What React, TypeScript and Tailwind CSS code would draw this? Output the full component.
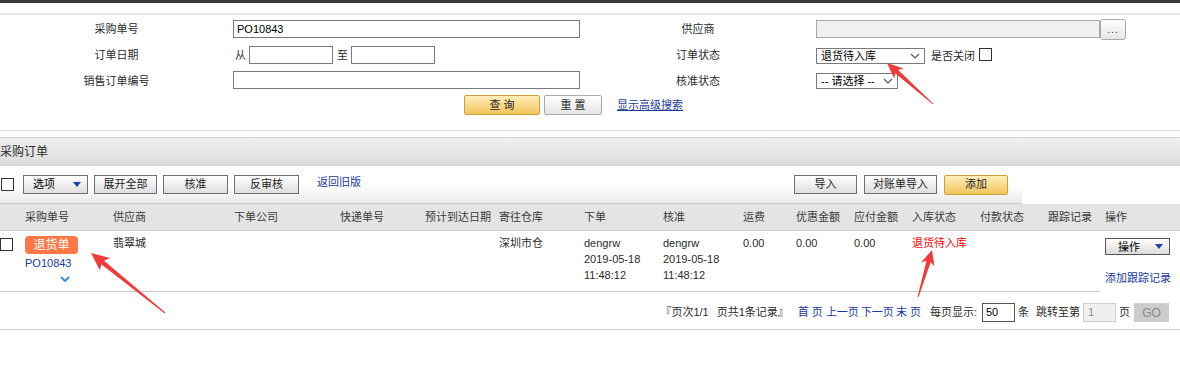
import React from 'react';

const btnBase =
  'h-[19px] border border-[#707070] bg-gradient-to-b from-white to-[#dedede] flex items-center text-[#222] shrink-0';
const btn = `${btnBase} justify-center`;
const goldBtn =
  'h-[20px] border border-[#cf9f35] rounded-[2px] bg-gradient-to-b from-[#fdeeb8] to-[#f1c55a] flex items-center justify-center text-[#222] shrink-0';
const link = 'text-[#1b3a9e]';

const Chevron = ({ className = '' }: { className?: string }) => (
  <svg width="10" height="6" viewBox="0 0 10 6" className={className}>
    <path d="M1 1 L5 5 L9 1" fill="none" stroke="#555" strokeWidth="1.2" />
  </svg>
);

const Caret = () => (
  <svg width="8" height="5" viewBox="0 0 8 5">
    <path d="M0 0 H8 L4 5 Z" fill="#1c3db5" />
  </svg>
);

const Checkbox = ({ className = '' }: { className?: string }) => (
  <div className={`w-[13px] h-[13px] border border-[#333] bg-white shrink-0 ${className}`} />
);

// red annotation arrow: thin tail, notched head
const arrow = (x1: number, y1: number, x2: number, y2: number, headLen: number, headW: number) => {
  const dx = x2 - x1;
  const dy = y2 - y1;
  const len = Math.hypot(dx, dy);
  const ux = dx / len;
  const uy = dy / len;
  const px = -uy;
  const py = ux;
  const bx = x2 - ux * headLen;
  const by = y2 - uy * headLen;
  const nx = bx + ux * 3;
  const ny = by + uy * 3;
  const pts = [
    [x1 + px * 0.5, y1 + py * 0.5],
    [nx + px * 2.2, ny + py * 2.2],
    [bx + px * headW, by + py * headW],
    [x2, y2],
    [bx - px * headW, by - py * headW],
    [nx - px * 2.2, ny - py * 2.2],
    [x1 - px * 0.5, y1 - py * 0.5],
  ];
  return pts.map((p) => p.join(',')).join(' ');
};

const cols =
  'grid grid-cols-[25px_88px_121px_106px_85px_74px_85px_79px_80px_53px_58px_58px_68px_68px_57px_75px]';

const headers = [
  '',
  '采购单号',
  '供应商',
  '下单公司',
  '快递单号',
  '预计到达日期',
  '寄往仓库',
  '下单',
  '核准',
  '运费',
  '优惠金额',
  '应付金额',
  '入库状态',
  '付款状态',
  '跟踪记录',
  '操作',
];

export default function App() {
  return (
    <div className="relative w-[1180px] h-[371px] overflow-hidden bg-white text-[11px] text-[#2b2b2b] whitespace-nowrap font-['Liberation_Sans','Noto_Sans_CJK_SC',sans-serif]">
      <div className="h-[3px] bg-[#383838]" />
      <div className="h-[10px]" />
      <div className="h-[2px] bg-[#e8e8e8]" />

      {/* search form */}
      <div className="pt-[1px]">
        <div className="grid grid-cols-[233px_347px_236px_1fr] auto-rows-[26px] items-center">
          <div className="text-center">采购单号</div>
          <div className="h-[18px] border border-[#7a7a7a] px-[3px] flex items-center text-black">PO10843</div>
          <div className="text-center">供应商</div>
          <div className="flex items-center">
            <div className="w-[284px] h-[18px] border border-[#a8a8a8] bg-[#f0f0f0]" />
            <div className="w-[26px] h-[21px] border border-[#a8a8a8] rounded-[3px] bg-gradient-to-b from-white to-[#e6e6e6] flex items-center justify-center text-[10px] tracking-[1px]">
              ...
            </div>
          </div>

          <div className="text-center">订单日期</div>
          <div className="flex items-center">
            <span className="ml-[2px]">从</span>
            <div className="ml-[3px] w-[84px] h-[18px] border border-[#7a7a7a]" />
            <span className="ml-[4px]">至</span>
            <div className="ml-[3px] w-[84px] h-[18px] border border-[#7a7a7a]" />
          </div>
          <div className="text-center">订单状态</div>
          <div className="flex items-center pt-[2px]">
            <div className="w-[109px] h-[16px] border border-[#7a7a7a] flex items-center justify-between pl-[4px] pr-[4px]">
              <span className="text-black">退货待入库</span>
              <Chevron />
            </div>
            <span className="ml-[6px]">是否关闭</span>
            <Checkbox className="ml-[4px] -mt-[3px]" />
          </div>

          <div className="text-center">销售订单编号</div>
          <div className="h-[18px] border border-[#7a7a7a] -mt-[2px]" />
          <div className="text-center">核准状态</div>
          <div className="flex items-center">
            <div className="w-[82px] h-[16px] border border-[#7a7a7a] flex items-center justify-between pl-[4px] pr-[4px]">
              <span className="text-black">-- 请选择 --</span>
              <Chevron />
            </div>
          </div>
        </div>

        <div className="mt-[1px] h-[20px] flex items-center pl-[464px]">
          <div className={`${goldBtn} w-[76px]`}>查 询</div>
          <div className="ml-[4px] w-[58px] h-[20px] border border-[#aaa] rounded-[2px] bg-gradient-to-b from-white to-[#e4e4e4] flex items-center justify-center">
            重 置
          </div>
          <a className={`${link} ml-[15px] underline mt-[1px]`}>显示高级搜索</a>
        </div>
      </div>

      <div className="mt-[15px] h-px bg-[#dcdcdc]" />
      <div className="h-[6px]" />

      {/* list section */}
      <div className="h-[29px] border-t border-[#d2d2d2] border-b border-[#bcbcbc] bg-gradient-to-b from-[#f0f0f0] to-[#dcdcdc] flex items-center text-[12px]">
        采购订单
      </div>

      <div className="h-[38px] w-[1022px] border-b border-[#c8c8c8] bg-gradient-to-b from-white via-white to-[#ebebeb] flex items-center">
        <Checkbox className="ml-[1px]" />
        <div className={`${btnBase} justify-between ml-[9px] w-[65px] pl-[9px] pr-[6px]`}>
          <span className="text-black">选项</span>
          <Caret />
        </div>
        <div className={`${btn} ml-[6px] w-[63px]`}>展开全部</div>
        <div className={`${btn} ml-[6px] w-[65px]`}>核准</div>
        <div className={`${btn} ml-[6px] w-[65px]`}>反审核</div>
        <a className={`${link} ml-[18px] -mt-[4px]`}>返回旧版</a>
        <div className={`${btn} ml-auto w-[63px]`}>导入</div>
        <div className={`${btn} ml-[7px] w-[73px]`}>对账单导入</div>
        <div className={`${goldBtn} ml-[7px] w-[64px] h-[19px]`}>添加</div>
        <div className="w-[14px] shrink-0" />
      </div>

      <div className={`${cols} h-[27px] bg-[#e4e4e4] border-b border-[#cdcdcd] items-center text-[#3a3a3a]`}>
        {headers.map((h, i) => (
          <div key={i}>{h}</div>
        ))}
      </div>

      {/* data row */}
      <div className={`${cols} h-[60px] pt-[4px] leading-[16px]`}>
        <div className="pt-[3px]">
          <Checkbox />
        </div>
        <div className="flex flex-col">
          <div className="w-[53px] h-[18px] rounded-[4px] bg-[#fe7847] text-white text-[12px] flex items-center justify-center mt-[1px]">
            退货单
          </div>
          <a className={`${link} mt-[1px]`}>PO10843</a>
          <svg width="10" height="6" viewBox="0 0 10 6" className="ml-[35px] mt-[5px]">
            <path d="M1 1 L5 5 L9 1" fill="none" stroke="#3d8fe0" strokeWidth="2" />
          </svg>
        </div>
        <div>翡翠城</div>
        <div />
        <div />
        <div />
        <div>深圳市仓</div>
        <div>
          dengrw
          <br />
          2019-05-18
          <br />
          11:48:12
        </div>
        <div>
          dengrw
          <br />
          2019-05-18
          <br />
          11:48:12
        </div>
        <div>0.00</div>
        <div>0.00</div>
        <div>0.00</div>
        <div className="text-[#ff0000]">退货待入库</div>
        <div />
        <div />
        <div className="flex flex-col">
          <div className="w-[65px] h-[17px] mt-[3px] border border-[#555] bg-gradient-to-b from-white to-[#dcdcdc] flex items-center justify-between pl-[12px] pr-[6px] text-black">
            <span>操作</span>
            <Caret />
          </div>
          <a className={`${link} mt-[15px]`}>添加跟踪记录</a>
        </div>
      </div>
      <div className="w-[1100px] h-px bg-[#c8c8c8]" />

      {/* pagination */}
      <div className="h-[38px] pt-[4px] border-b border-[#cfcfcf] flex items-center justify-end pr-[11px]">
        <span>『页次1/1</span>
        <span className="ml-[8px]">页共1条记录』</span>
        <a className={`${link} ml-[9px]`}>首 页</a>
        <a className={`${link} ml-[3px]`}>上一页</a>
        <a className={`${link} ml-[2px]`}>下一页</a>
        <a className={`${link} ml-[2px]`}>末 页</a>
        <span className="ml-[9px]">每页显示:</span>
        <div className="ml-[5px] w-[33px] h-[19px] border border-[#555] flex items-center pl-[3px] text-black shrink-0">50</div>
        <span className="ml-[3px]">条</span>
        <span className="ml-[7px]">跳转至第</span>
        <div className="ml-[3px] w-[33px] h-[19px] border border-[#cfcfcf] bg-[#efefef] flex items-center pl-[4px] text-[#888] shrink-0">1</div>
        <span className="ml-[3px]">页</span>
        <div className="ml-[4px] w-[35px] h-[19px] bg-[#cccccc] flex items-center justify-center text-[#888] text-[12px] shrink-0">GO</div>
      </div>

      <svg className="absolute left-0 top-0 pointer-events-none" width="1180" height="371">
        <polygon points={arrow(933, 104, 887, 63, 16, 7)} fill="#f23a3a" />
        <polygon points={arrow(165, 313, 91, 253, 18, 8)} fill="#f23a3a" />
        <polygon points={arrow(918, 297, 932, 250, 15, 7)} fill="#f23a3a" />
      </svg>
    </div>
  );
}
